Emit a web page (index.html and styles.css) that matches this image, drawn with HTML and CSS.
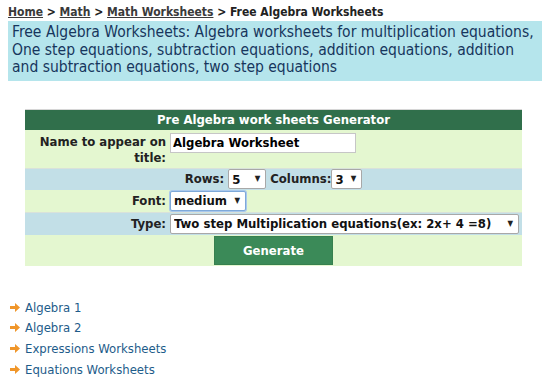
FILE: index.html
```html
<!DOCTYPE html>
<html>
    <head>
        <title>Free Algebra Worksheets</title>
        <meta charset="utf-8" />
        <link rel="stylesheet" href="styles.css">
    </head>
    <body>
        <div class="crumbs">
            <a href="#">Home</a> &gt; <a href="#">Math</a> &gt; <a href="#">Math Worksheets</a> &gt; Free Algebra Worksheets
        </div>
        <h1 class="intro">Free Algebra Worksheets: Algebra worksheets for multiplication equations, One step equations, subtraction equations, addition equations, addition and subtraction equations, two step equations</h1>

        <form class="generator">
            <table>
                <tr class="head">
                    <th colspan="2">Pre Algebra work sheets Generator</th>
                </tr>
                <tr class="green r-name">
                    <td class="label">Name to appear on title:</td>
                    <td class="top"><input type="text" class="title-input" value="Algebra Worksheet"></td>
                </tr>
                <tr class="blue r-22">
                    <td colspan="2" class="center">
                        Rows: <span class="pick"><select class="w-rows"><option>5</option></select></span>
                        Columns:<span class="pick"><select class="w-cols"><option>3</option></select></span>
                    </td>
                </tr>
                <tr class="green r-22">
                    <td class="label mid">Font:</td>
                    <td><span class="pick"><select class="w-font focused"><option>medium</option></select></span></td>
                </tr>
                <tr class="blue r-23">
                    <td class="label mid">Type:</td>
                    <td><span class="pick"><select class="w-type"><option>Two step Multiplication equations(ex: 2x+ 4 =8)</option></select></span></td>
                </tr>
                <tr class="green r-31">
                    <td colspan="2" class="center last">
                        <button type="button">Generate</button>
                    </td>
                </tr>
            </table>
        </form>

        <ul class="links">
            <li><svg width="10" height="9" viewBox="0 0 10 9"><path d="M0 3h5V0l5 4.5L5 9V6H0z" fill="#f0962a"/></svg><a href="#">Algebra 1</a></li>
            <li><svg width="10" height="9" viewBox="0 0 10 9"><path d="M0 3h5V0l5 4.5L5 9V6H0z" fill="#f0962a"/></svg><a href="#">Algebra 2</a></li>
            <li><svg width="10" height="9" viewBox="0 0 10 9"><path d="M0 3h5V0l5 4.5L5 9V6H0z" fill="#f0962a"/></svg><a href="#">Expressions Worksheets</a></li>
            <li><svg width="10" height="9" viewBox="0 0 10 9"><path d="M0 3h5V0l5 4.5L5 9V6H0z" fill="#f0962a"/></svg><a href="#">Equations Worksheets</a></li>
        </ul>
    </body>
</html>
```

FILE: styles.css
```css
body {
    margin: 4px 8px;
    font-family: "DejaVu Sans Condensed", "DejaVu Sans", Verdana, sans-serif;
    font-stretch: condensed;
    font-size: 13px;
    color: #222;
}

.crumbs {
    font-weight: bold;
    font-size: 12px;
    line-height: 16px;
    color: #222;
}

.crumbs a {
    color: #3a3a3a;
    text-decoration: underline;
}

.intro {
    margin: 1px 0 0 -1px;
    padding: 3px 5px 4px 5px;
    background: #b5e5ec;
    color: #17365d;
    font-size: 15.5px;
    font-weight: normal;
    line-height: 17.5px;
}

.generator {
    margin: 28px 0 0 17px;
}

.generator table {
    width: 497px;
    border-collapse: separate;
    border-spacing: 0;
    border-top: 1px solid #d6d6d6;
}

.generator td,
.generator th {
    padding: 0 2px;
}

select,
input,
button {
    font-family: "DejaVu Sans Condensed", "DejaVu Sans", sans-serif;
    font-stretch: condensed;
}

.head {
    height: 20px;
}

.head th {
    background: #306f4b;
    color: #fff;
    font-size: 13px;
    line-height: 16px;
    text-align: center;
}

.r-name { height: 38px; }
.r-22 { height: 22px; }
.r-23 { height: 23px; }
.r-31 { height: 31px; }

.green {
    background: #e4f7d0;
}

.blue {
    background: #c2dfe7;
}

.blue td {
    border-top: 1px solid #d9e2da;
}

.label {
    width: 139px;
    text-align: right;
    font-weight: bold;
    line-height: 16px;
    vertical-align: top;
}

.generator td.label {
    padding-top: 4px;
}

.generator td.mid {
    vertical-align: middle;
    padding-top: 0;
}

.top {
    vertical-align: top;
}

.center {
    text-align: center;
    font-weight: bold;
}

.title-input {
    width: 186px;
    height: 20px;
    box-sizing: border-box;
    border: 1px solid #c6c6c6;
    font-weight: bold;
    font-size: 13px;
    padding: 1px 2px;
    margin: 3px 0 0 0;
}

.pick {
    position: relative;
    display: inline-block;
    vertical-align: middle;
}

.pick::after {
    content: "\25BC";
    position: absolute;
    right: 6px;
    top: 5px;
    font-size: 8px;
    color: #222;
    pointer-events: none;
}

.pick select {
    appearance: none;
    -webkit-appearance: none;
    height: 20px;
    border: 1px solid #a8a8a8;
    border-radius: 2px;
    background: #fff;
    font-weight: bold;
    font-size: 13px;
    color: #111;
    padding: 0 3px;
    margin: 0;
    display: block;
}

.w-rows { width: 38px; }
.w-cols { width: 31px; }
.w-font { width: 76px; }
.w-type { width: 349px; }

.focused {
    border: 1px solid #7ea9d9 !important;
    box-shadow: 0 0 0 1px #a9c8ec;
}

.generator td.last {
    padding: 1px 0 1px 0;
}

.last button {
    display: block;
    margin: 0 auto;
    width: 119px;
    height: 29px;
    background: #3b8a58;
    color: #fff;
    border: 1px solid #37804f;
    font-weight: bold;
    font-size: 13px;
    cursor: pointer;
}

.links {
    list-style: none;
    margin: 34px 0 0 2px;
    padding: 0;
}

.links li {
    height: 20.7px;
    line-height: 16px;
}

.links svg {
    margin-right: 5px;
}

.links a {
    color: #1e5c8a;
    text-decoration: none;
    font-size: 13px;
}
```
